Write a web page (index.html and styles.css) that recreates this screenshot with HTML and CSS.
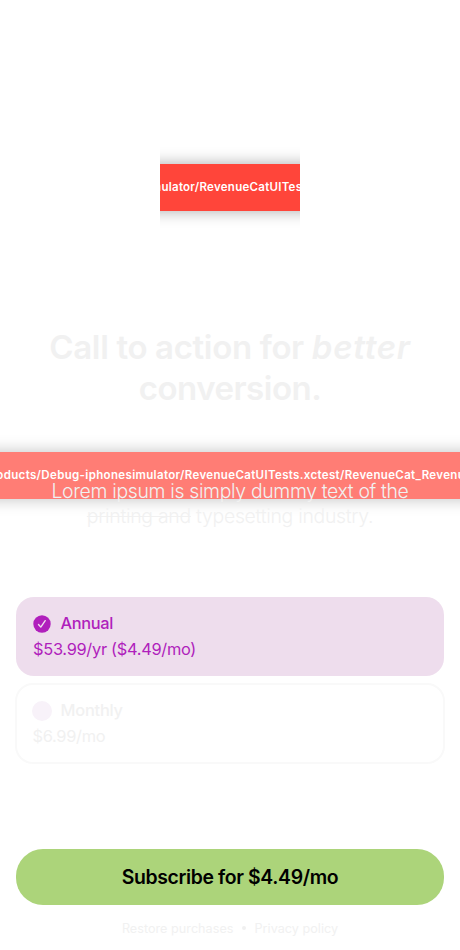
FILE: index.html
```
<!DOCTYPE html>
<html lang="en">
<head>
<meta charset="utf-8">
<title>Paywall</title>
<link rel="stylesheet" href="styles.css">
</head>
<body>
<main class="paywall">
  <div class="icon-frame">
    <div class="error error-icon"><span>iphonesimulator/RevenueCatUITests.xctest</span></div>
  </div>
  <h1 class="title"><span class="title-first">Call to action for <em>better</em></span><br><span class="title-second">conversion.</span></h1>
  <div class="header-frame">
    <div class="error error-header"><span>Products/Debug-iphonesimulator/RevenueCatUITests.xctest/RevenueCat_RevenueC</span></div>
  </div>
  <p class="subtitle"><span class="sub-first">Lorem ipsum is simply dummy text of the</span><br><span class="sub-second"><s>printing and</s> typesetting industry.</span></p>
  <section class="packages">
    <div class="package selected">
      <div class="package-name">
        <svg class="check" viewBox="0 0 18 18"><circle cx="9" cy="9" r="8.7"/><path d="M5.5 9.5 7.8 12.1 12.2 5.7"/></svg>
        <span class="annual">Annual</span>
      </div>
      <div class="price price-annual">$53.99/yr ($4.49/mo)</div>
    </div>
    <div class="package unselected">
      <div class="package-name">
        <i class="dot"></i>
        <span class="monthly">Monthly</span>
      </div>
      <div class="price price-monthly">$6.99/mo</div>
    </div>
  </section>
  <button class="subscribe"><span>Subscribe for $4.49/mo</span></button>
  <footer class="footer"><span class="restore">Restore purchases</span><i class="bullet"></i><span class="privacy">Privacy policy</span></footer>
</main>
</body>
</html>
```
FILE: styles.css
```
* { box-sizing: border-box; }
body { margin: 0; background: #fff; font-family: Inter, "Liberation Sans", sans-serif; }
.paywall { width: 460px; height: 950px; overflow: hidden; display: flex; flex-direction: column; }
.icon-frame { width: 140px; height: 140px; margin: 118px auto 0; padding-top: 46px; overflow: hidden; flex: none; }
.error { height: 47px; padding-bottom: 2px; display: flex; justify-content: center; align-items: center; color: #fff; font-size: 11.5px; font-weight: 600; white-space: nowrap; box-shadow: 0 0 15px rgba(0,0,0,.33); }
.error-icon { background: #ff453a; margin: 0 -30px; padding-right: 6px; }
.error-icon span { letter-spacing: .27px; }
.error-header span { letter-spacing: .35px; }
.title { margin: 69px 0 0; font-size: 33px; line-height: 40.5px; font-weight: 600; text-align: center; color: #f1f1f1; white-space: nowrap; }
.title-first { letter-spacing: -.35px; }
.title-first em { letter-spacing: .75px; }
.title-second { letter-spacing: -.5px; }
.header-frame { height: 87px; margin-top: 24px; padding-top: 20px; overflow: hidden; flex: none; }
.error-header { background: #ff7d75; margin: 0 -30px; padding-left: 5px; box-shadow: 0 0 15px rgba(0,0,0,.25); }
.subtitle { position: relative; margin: -40px 0 0; font-size: 19.4px; line-height: 25px; font-weight: 300; text-align: center; color: #f1f1f1; white-space: nowrap; }
.sub-first { letter-spacing: -.33px; }
.sub-second { letter-spacing: -.27px; }
.subtitle s { text-decoration-thickness: 1px; }
.packages { margin: 68px 15px 0; display: flex; flex-direction: column; gap: 7px; }
.package { padding: 16px 18px 0 17px; border-radius: 18px; color: #b01fbc; }
.selected { height: 79px; margin: 0 1px; background: #eedded; }
.unselected { height: 81px; border: 2px solid #f9f9f9; padding: 15px 15px 0; color: #f1f1f1; }
.package-name { display: flex; align-items: center; height: 20px; font-size: 16.4px; font-weight: 500; }
.check { width: 18px; height: 18px; margin: 2px 9.5px 0 0; fill: #b01fbc; }
.check path { fill: none; stroke: #eedded; stroke-width: 1.4; stroke-linecap: round; stroke-linejoin: round; }
.annual { letter-spacing: -.37px; }
.monthly { letter-spacing: -.22px; }
.dot { width: 20px; height: 20px; border-radius: 50%; margin: 2px 8.5px 0 0; background: #f8f2f9; }
.price { margin-top: 6px; line-height: 21px; font-size: 16.4px; letter-spacing: -.3px; white-space: nowrap; }
.price-monthly { padding-left: .5px; }
.subscribe { margin: 85px 16px 0; height: 56px; border: 0; border-radius: 27px; background: #acd47a; color: #000; font: 600 19.4px Inter, "Liberation Sans", sans-serif; letter-spacing: -.36px; }
.footer { margin-top: 15px; height: 16px; display: flex; justify-content: center; align-items: center; font-size: 12.6px; letter-spacing: .04px; color: #f1f1f1; white-space: nowrap; }
.bullet { width: 4px; height: 4px; margin: 0 8.5px; border-radius: 50%; background: #f0f0f0; }
```
